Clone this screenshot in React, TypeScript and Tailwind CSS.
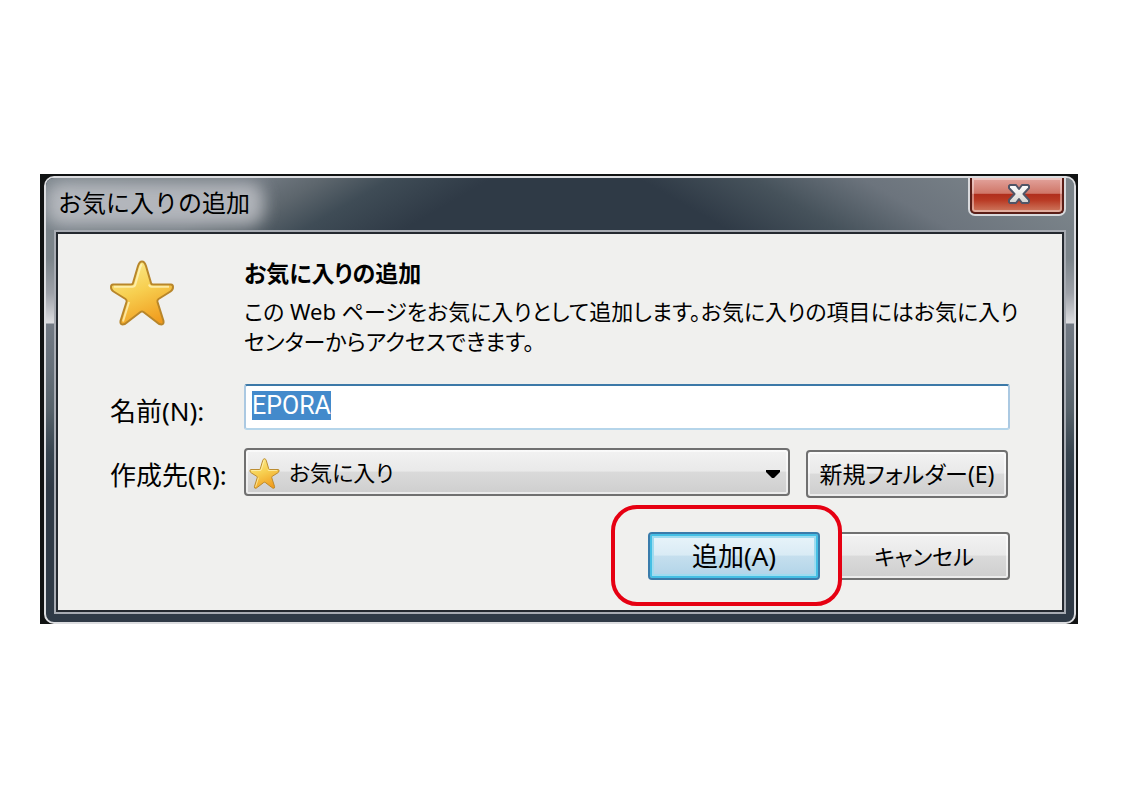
import { useEffect, useRef, useState } from 'react'
import clsx from 'clsx'

function StarIcon({ id, className }: { id: string; className?: string }) {
  return (
    <svg viewBox="0 0 64 66" className={className} aria-hidden="true">
      <defs>
        <linearGradient id={id} x1="0.3" y1="0" x2="0.7" y2="1">
          <stop offset="0" stopColor="#fbe98a" />
          <stop offset="0.45" stopColor="#f7cf50" />
          <stop offset="1" stopColor="#f09a1c" />
        </linearGradient>
      </defs>
      <path
        d="M32 1.5C30 1.5 28.8 3.5 28 6L23 23Q22.7 24.5 21 24.5H3Q1 24.5 1 27Q1 30 3.5 31.5L15.5 39Q17 40 16.5 42L10.5 61Q10 64.5 12.5 64.5Q15 64.5 17.5 62L30.5 52Q32 51 33.5 52L46.5 62Q49 64.5 51.5 64.5Q54 64.5 53.5 61L47.5 42Q47 40 48.5 39L60.5 31.5Q63 30 63 27Q63 24.5 61 24.5H43Q41.3 24.5 41 23L36 6C35.2 3.5 34 1.5 32 1.5Z"
        fill={`url(#${id})`}
        stroke="#b8862a"
        strokeWidth="2"
      />
      <path
        d="M32 4.5Q31 5 30 8L25.3 24.5Q24.8 26.7 22.5 26.7H4M39 24.5Q39.5 26.7 41.5 26.7H59M19 42L13 61.5"
        fill="none"
        stroke="#fff6bf"
        strokeWidth="2"
        strokeOpacity="0.75"
      />
    </svg>
  )
}

function CloseIcon() {
  return (
    <svg viewBox="0 0 22 20" className="h-5 w-[22px]" aria-hidden="true">
      <defs>
        <linearGradient id="close-fill" x1="0" y1="0" x2="0" y2="1">
          <stop offset="0" stopColor="#ffffff" />
          <stop offset="1" stopColor="#d4d4d0" />
        </linearGradient>
      </defs>
      <path
        d="M2 1H8L11 5L14 1H20L21 2V4L15.5 10L21 16V18L20 19H14L11 15L8 19H2L1 18V16L6.5 10L1 4V2Z"
        fill="url(#close-fill)"
        stroke="#505566"
        strokeWidth="2"
        strokeLinejoin="round"
      />
    </svg>
  )
}

const face =
  'rounded-[4px] border-2 border-[#707070] bg-[linear-gradient(#f2f2f2,#e9e9e9_48%,#dadada_50%,#cecece)] shadow-[inset_0_0_0_2px_rgba(255,255,255,0.6)]'

export default function App() {
  const [name, setName] = useState('EPORA')
  const nameRef = useRef<HTMLInputElement>(null)

  useEffect(() => {
    nameRef.current?.focus()
    nameRef.current?.select()
  }, [])

  return (
    <main className="min-h-screen bg-white pt-[174px] pr-[45px] pb-10 pl-10 font-['Noto_Sans','Noto_Sans_CJK_JP',sans-serif] text-2xl leading-[30px] text-black">
      <div className="bg-[#111313] pt-0.5 pr-0.5 pl-1">
        <div
          role="dialog"
          aria-labelledby="window-title"
          className="overflow-hidden rounded-[10px] border-2 border-[#dcdde0] bg-[linear-gradient(#7b848a,#7b848a_80px,#9da1a8_115px,#dcdde0_145px,#727a84_146px,#66707a_190px,#56626a_232px,#37444f_275px,#2f3a46_310px)]"
        >
          {/* Title bar */}
          <header className="relative flex h-[52px] items-start justify-between overflow-hidden bg-[linear-gradient(150deg,#7c858c,#6f777f_20%,#5d666d_25%,#3f4c56_31%,#2f3a46_40%,#2f3a46_45%,transparent_52%),linear-gradient(30deg,#2f3a46_61%,#46525b_71%,#6c747d_81%,#7b848a_95%)]">
            <div className="absolute top-1 left-0 h-11 w-[218px] rounded-2xl bg-[#c3c5ca] opacity-80 blur-[8px]" />
            <h1 id="window-title" className="relative pt-2.5 pl-3">
              お気に入りの追加
            </h1>
            <button
              type="button"
              aria-label="閉じる"
              className="mr-2 rounded-b-[7px] border-2 border-t-0 border-[#d9dadd]"
            >
              <span className="flex h-9 w-[94px] items-center justify-center rounded-b-[5px] border-2 border-t-0 border-[#5a1d16] bg-[linear-gradient(#e3a49d,#cf7668_45%,#b02e1c_48%,#b93a24_65%,#cf7c62)] pb-0.5 pl-1 shadow-[inset_0_0_0_2px_rgba(255,255,255,0.4)]">
                <CloseIcon />
              </span>
            </button>
          </header>

          <div className="mx-2 mb-2 border-2 border-[#a7abb2]">
            <form
              className="border-2 border-[#24292f] bg-[#f0f0ee] px-[52px] pt-6 pb-[30px]"
              onSubmit={(e) => e.preventDefault()}
            >
              <div className="grid grid-cols-[134px_minmax(0,1fr)]">
                <StarIcon id="star-large" className="mt-0.5 h-[66px] w-16" />
                <div className="-mr-6 [font-feature-settings:'palt']">
                  <h2 className="mb-2 text-[23px] font-bold">お気に入りの追加</h2>
                  <p className="text-[22px]">
                    この Web ページをお気に入りとして追加します。お気に入りの項目にはお気に入り
                    <br />
                    センターからアクセスできます。
                  </p>
                </div>
              </div>

              <div className="mt-7 grid grid-cols-[134px_minmax(0,1fr)]">
                <label htmlFor="name" className="pt-3 text-[26px]">
                  名前(N):
                </label>
                <input
                  id="name"
                  ref={nameRef}
                  type="text"
                  value={name}
                  onChange={(e) => setName(e.target.value)}
                  className="h-[46px] w-full rounded-[3px] border-2 border-[#abc9e2] border-t-[#3c79a8] border-b-[#b5d5ea] bg-white px-1.5 pt-1 pb-2 font-[Roboto,'Noto_Sans_CJK_JP',sans-serif] text-[25px] outline-none selection:bg-[#438acb] selection:text-white"
                />
              </div>

              <div className="mt-[18px] grid grid-cols-[134px_minmax(0,1fr)]">
                <label htmlFor="folder" className="pt-3 text-[26px]">
                  作成先(R):
                </label>
                <div className="flex items-start gap-4 pr-0.5 [font-feature-settings:'palt']">
                  <div className="relative flex-1">
                    <select
                      id="folder"
                      className={clsx(face, 'h-12 w-full appearance-none pl-[43px] text-[22px] outline-none')}
                    >
                      <option>お気に入り</option>
                    </select>
                    <StarIcon
                      id="star-small"
                      className="pointer-events-none absolute top-2.5 left-[5px] h-[31px] w-[31px]"
                    />
                    <svg
                      viewBox="0 0 14 8"
                      className="pointer-events-none absolute top-[22px] right-2.5 h-2 w-3.5"
                      aria-hidden="true"
                    >
                      <path d="M0 0H14V2L8 8H6L0 2Z" />
                    </svg>
                  </div>
                  <button type="button" className={clsx(face, 'mt-0.5 h-12 w-[202px] text-[23px]')}>
                    新規フォルダー(E)
                  </button>
                </div>
              </div>

              <div className="mt-[34px] flex justify-end gap-[18px] [font-feature-settings:'palt']">
                <div className="relative">
                  <button
                    type="submit"
                    className="h-12 w-[172px] rounded-[4px] border-2 border-[#3a7cab] bg-[linear-gradient(#e9f4fa,#d9ebf5_48%,#c5dfee_50%,#b0d3e8)] text-[26px] shadow-[inset_0_0_0_2px_#45bfe4,inset_0_0_0_4px_#9edcf0]"
                  >
                    追加(A)
                  </button>
                  <div className="pointer-events-none absolute -top-[27px] -right-[22px] -bottom-[26px] -left-[37px] z-10 rounded-[26px] border-4 border-[#e60012]" />
                </div>
                <button type="button" className={clsx(face, 'h-12 w-[172px] text-[22px]')}>
                  キャンセル
                </button>
              </div>
            </form>
          </div>
        </div>
      </div>
    </main>
  )
}
